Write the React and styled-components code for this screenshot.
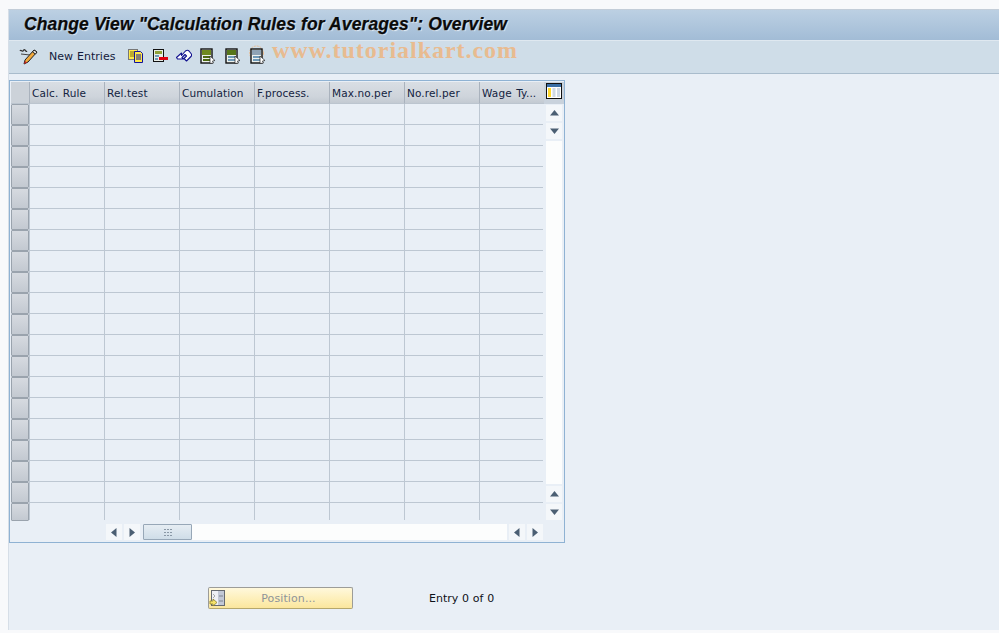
import React from "react";
import styled, { createGlobalStyle } from "styled-components";

const Global = createGlobalStyle`
  html, body { margin: 0; padding: 0; background: #f8f9fb; }
  #root { width: 999px; height: 633px; overflow: hidden; }
  * { box-sizing: border-box; }
`;
const Page = styled.div`
  width: 999px; height: 633px; padding: 9px 0 3px 8px;
  font-family: "DejaVu Sans", sans-serif; font-size: 11px; color: #10141e;
`;
const Frame = styled.div`
  position: relative; height: 100%; background: #e9eff6; display: flex; flex-direction: column;
  border-top: 1px solid #c3cdd8; border-left: 1px solid #d6dee7;
`;
const TitleBar = styled.div`
  height: 31px; flex: none; padding: 0 0 2px 15px; display: flex; align-items: center;
  background: linear-gradient(#bcd0e3, #a2bcd6);
  border-bottom: 1px solid #dfe8f0;
`;
const Title = styled.h1`
  margin: 0; font: italic bold 17.5px "Liberation Sans", sans-serif; color: #0a0a0a;
  letter-spacing: 0.125px; white-space: nowrap;
  -webkit-text-stroke: 0.25px #0a0a0a;
  text-shadow: 1px 1px 1px #e6eef5;
`;
const Toolbar = styled.div`
  height: 33px; flex: none; display: flex; align-items: center; padding: 0 0 2px 10px;
  background: #cfdde8; border-bottom: 1px solid #a9bccc;
`;
const ToolSlot = styled.span`
  display: inline-flex; width: ${p => p.$w || 16}px; height: 16px; flex: none; margin-right: ${p => p.$mr || 0}px;
`;
const ToolText = styled.span`
  margin-right: 12px; font-size: 11px; color: #131a3a; white-space: nowrap; width: 67px; word-spacing: 0.6px;
`;
const Watermark = styled.div`
  position: absolute; left: 263px; top: 27px;
  font: bold 24px "Liberation Serif", serif; letter-spacing: 0.97px; color: #e8bb90; white-space: nowrap;
`;
const Content = styled.div`
  flex: 1; padding: 6px 0 0 0; display: flex; flex-direction: column;
`;
const TableBox = styled.div`
  width: 556px; height: 463px; flex: none; padding: 1px 1px 0 1px;
  border: 1px solid #8fb2d3; background: #e9eff6;
  display: grid; grid-template-columns: 533px 20px; grid-template-rows: 22px 417px 21px;
`;
const Head = styled.div`
  display: grid; grid-template-columns: 18px repeat(6, 75px) 65px; height: 22px;
`;
const HeadCell = styled.div`
  background: linear-gradient(#d9dee4, #ced4db 70%, #c3cad2);
  border-left: 1px solid #a9b2bd; border-bottom: 1px solid #bcc5cf; padding: 4px 0 0 2px;
  font-size: 10.500px; line-height: 15px; color: #13233f; white-space: nowrap; overflow: hidden;
  word-spacing: 1px; letter-spacing: 0.12px;
`;
const Corner = styled.div`
  background: #ccd2d9; border-bottom: 1px solid #bcc5cf;
`;
const LayoutBtn = styled.div`
  height: 22px; background: #c9d2dc; padding: 1px 2px; display: flex; align-items: flex-start; justify-content: flex-start;
`;
const Body = styled.div`
  display: grid; grid-template-columns: 18px 514px; grid-template-rows: repeat(19, 21px) 18px;
  overflow: hidden;
`;
const RowHandle = styled.div`
  background: linear-gradient(#d6dae0, #c3c9d1);
  border: 1px solid #9aa3ad; border-radius: 1px;
`;
const Row = styled.div`
  display: grid; grid-template-columns: repeat(6, 75px) 64px;
  border-bottom: 1px solid ${p => p.$last ? "transparent" : "#bdc7d2"};
`;
const Cell = styled.div`
  border-left: 1px solid #bdc7d2;
`;
const VScroll = styled.div`
  display: flex; flex-direction: column; align-items: flex-start; gap: 2px; padding: 1px 0 1px 2px;
`;
const SBtn = styled.div`
  width: 16px; height: 16px; flex: none; background: #f4f7fa; display: flex; align-items: center; justify-content: center;
`;
const VTrack = styled.div`
  width: 16px; flex: 1; background: #fcfdfd;
`;
const HRow = styled.div`
  grid-column: 1 / span 2; display: flex; align-items: flex-start; padding: 3px 0 0 95px; height: 21px;
`;
const HBtn = styled(SBtn)`
  margin-right: ${p => p.$mr || 2}px;
`;
const Thumb = styled.div`
  width: 49px; height: 16px; flex: none; border: 1px solid #97a7b7; border-radius: 1px;
  background: linear-gradient(#e6edf3, #cfdde8);
  display: flex; align-items: center; justify-content: center;
`;
const HTrack = styled.div`
  width: 315px; height: 16px; flex: none; background: #fcfdfd; margin-right: 2px;
`;
const Footer = styled.div`
  display: flex; align-items: center; padding: 44px 0 0 199px;
`;
const PosButton = styled.div`
  width: 145px; height: 22px; display: flex; align-items: center; flex: none;
  border: 1px solid #9c9c98; border-bottom-color: #b5a76c; border-radius: 2px;
  background: linear-gradient(#fff8dc, #fdeeb6 60%, #fbe69d);
  color: #8f9499; font-size: 11px;
`;
const PosLabel = styled.span`
  flex: 1; text-align: center; letter-spacing: 0.1px;
`;
const EntryText = styled.span`
  margin-left: 76px; color: #0e1118; font-size: 11px; white-space: nowrap; word-spacing: 0.3px;
`;

const Pencil = () => (
  <svg width="20" height="18" viewBox="0 0 20 18">
    <path d="M1 3c1-2 2 1 3 0s1-2 2-1 1 2 2 1" fill="none" stroke="#333" strokeWidth="1.2" />
    <path d="M2 6l9 1" stroke="#444" strokeWidth="1" />
    <path d="M15 2l3 2-9 10-4 2 1-4z" fill="#f2a93b" stroke="#222" strokeWidth="1" />
    <path d="M15 2l3 2-1.500 2-3-2z" fill="#e8e8e8" stroke="#222" strokeWidth="1" />
    <path d="M5 16l1-3 2 1.500z" fill="#c22" />
  </svg>
);
const Copy = () => (
  <svg width="16" height="16" viewBox="0 0 16 16">
    <rect x="0.500" y="1.500" width="9" height="10" fill="#ffe94a" stroke="#777" />
    <path d="M2 4h6M2 6h6M2 8h6" stroke="#7a6a10" />
    <path d="M6.500 3.500h6l2 2v9h-8z" fill="#ffe94a" stroke="#11119a" />
    <path d="M8 7h5M8 9h5M8 11h5" stroke="#11119a" />
  </svg>
);
const Delete = () => (
  <svg width="16" height="16" viewBox="0 0 16 16">
    <rect x="1.500" y="1.500" width="10" height="12" fill="#e8eee8" stroke="#111" />
    <rect x="3" y="3" width="7" height="3" fill="#8ea03a" />
    <path d="M3 8h4M3 11h3" stroke="#6f9ab8" strokeWidth="2" />
    <rect x="7" y="9" width="9" height="3" fill="#e00012" />
  </svg>
);
const Undo = () => (
  <svg width="16" height="16" viewBox="0 0 16 16">
    <path d="M.5 9.500l5-4.500v2.500l4-4.500c1.500-1 2.500-1 3.500 0l2 2.500c.8 1 .8 2 0 3l-4.500 4.500-2.500-2.500 2.500-2.500-1.500-1.500-3 3 1.500 1.500h-6z" fill="#fff" stroke="#11118f" strokeWidth="1.100" strokeLinejoin="round" />
  </svg>
);
const Block = ({ head, line, halo }) => (
  <svg width="17" height="18" viewBox="0 0 17 18" style={{ overflow: "visible" }}>
    {halo && <circle cx="6.500" cy="5" r="7" fill="none" stroke="#e8bb90" strokeWidth="1" strokeDasharray="2 1" />}
    <rect x="1" y="1" width="11" height="14" fill="#eef2ee" stroke="#111" strokeWidth="1.400" />
    <rect x="2" y="2" width="9" height="5" fill={head} />
    <path d="M3 9h7M3 12h7" stroke={line} strokeWidth="2" />
    <path d="M10 8l5 4.500-2.500.5 1 2-3.500.5z" fill="#fff" stroke="#222" strokeWidth="0.700" />
  </svg>
);
const LayoutIcon = () => (
  <svg width="16" height="16" viewBox="0 0 16 16">
    <rect x="0.500" y="0.500" width="15" height="15" fill="#fff" stroke="#111" />
    <rect x="1" y="1" width="14" height="3" fill="#3a6ea5" />
    <rect x="2" y="5" width="3" height="9" fill="#ffd92e" />
    <rect x="6.500" y="5" width="3" height="9" fill="#cfd9e4" />
    <rect x="11" y="5" width="3" height="9" fill="#cfd9e4" />
  </svg>
);
const PosIcon = () => (
  <svg width="16" height="18" viewBox="0 0 16 18">
    <rect x="2.500" y="1.500" width="13" height="15" fill="#c2c8d6" stroke="#666a70" />
    <rect x="3" y="2" width="6" height="14" fill="#eef0f5" />
    <path d="M10 7h4M10 12h4" stroke="#7e8490" />
    <path d="M4 5l2 2-2 2" fill="none" stroke="#aaa" />
    <path d="M1 12h3v-2l4 3.500-4 3.500v-2H1z" fill="#f6e36b" stroke="#8a7d2b" strokeWidth="0.800" />
  </svg>
);
const Up = () => <svg width="9" height="6" viewBox="0 0 9 6"><path d="M4.500 0L9 5.500H0z" fill="#4b5f73" /></svg>;
const Down = () => <svg width="9" height="6" viewBox="0 0 9 6"><path d="M0 .5h9L4.500 6z" fill="#4b5f73" /></svg>;
const Left = () => <svg width="6" height="9" viewBox="0 0 6 9"><path d="M5.500 0v9L0 4.500z" fill="#4b5f73" /></svg>;
const Right = () => <svg width="6" height="9" viewBox="0 0 6 9"><path d="M.5 0v9L6 4.500z" fill="#4b5f73" /></svg>;
const Grip = () => (
  <svg width="8" height="7" viewBox="0 0 8 7">
    <path d="M0 .5h2M3 .5h2M6 .5h2M0 3.500h2M3 3.500h2M6 3.500h2M0 6.500h2M3 6.500h2M6 6.500h2" stroke="#8a98a6" />
  </svg>
);

const columns = ["Calc. Rule", "Rel.test", "Cumulation", "F.process.", "Max.no.per", "No.rel.per", "Wage Ty..."];
const rows = Array.from({ length: 20 }, (_, i) => i);

export default function App() {
  return (
    <Page>
      <Global />
      <Frame>
        <TitleBar><Title>Change View "Calculation Rules for Averages": Overview</Title></TitleBar>
        <Toolbar>
          <ToolSlot $w={20} $mr={10}><Pencil /></ToolSlot>
          <ToolText>New Entries</ToolText>
          <ToolSlot $mr={8}><Copy /></ToolSlot>
          <ToolSlot $mr={8}><Delete /></ToolSlot>
          <ToolSlot $mr={8}><Undo /></ToolSlot>
          <ToolSlot $mr={9}><Block head="#6f8a1e" line="#4d6a10" /></ToolSlot>
          <ToolSlot $mr={9}><Block head="#56761a" line="#6f9ab8" /></ToolSlot>
          <ToolSlot><Block head="#8ea3b5" line="#6f9ab8" halo /></ToolSlot>
        </Toolbar>
        <Watermark>www.tutorialkart.com</Watermark>
        <Content>
          <TableBox>
            <Head>
              <Corner />
              {columns.map(c => <HeadCell key={c}>{c}</HeadCell>)}
            </Head>
            <LayoutBtn><LayoutIcon /></LayoutBtn>
            <Body>
              {rows.map(r => (
                <React.Fragment key={r}>
                  <RowHandle />
                  <Row $last={r === 19}>{columns.map(c => <Cell key={c} />)}</Row>
                </React.Fragment>
              ))}
            </Body>
            <VScroll>
              <SBtn><Up /></SBtn>
              <SBtn><Down /></SBtn>
              <VTrack />
              <SBtn><Up /></SBtn>
              <SBtn><Down /></SBtn>
            </VScroll>
            <HRow>
              <HBtn><Left /></HBtn>
              <HBtn $mr={3}><Right /></HBtn>
              <Thumb><Grip /></Thumb>
              <HTrack />
              <HBtn><Left /></HBtn>
              <HBtn><Right /></HBtn>
            </HRow>
          </TableBox>
          <Footer>
            <PosButton><PosIcon /><PosLabel>Position...</PosLabel></PosButton>
            <EntryText>Entry 0 of 0</EntryText>
          </Footer>
        </Content>
      </Frame>
    </Page>
  );
}
